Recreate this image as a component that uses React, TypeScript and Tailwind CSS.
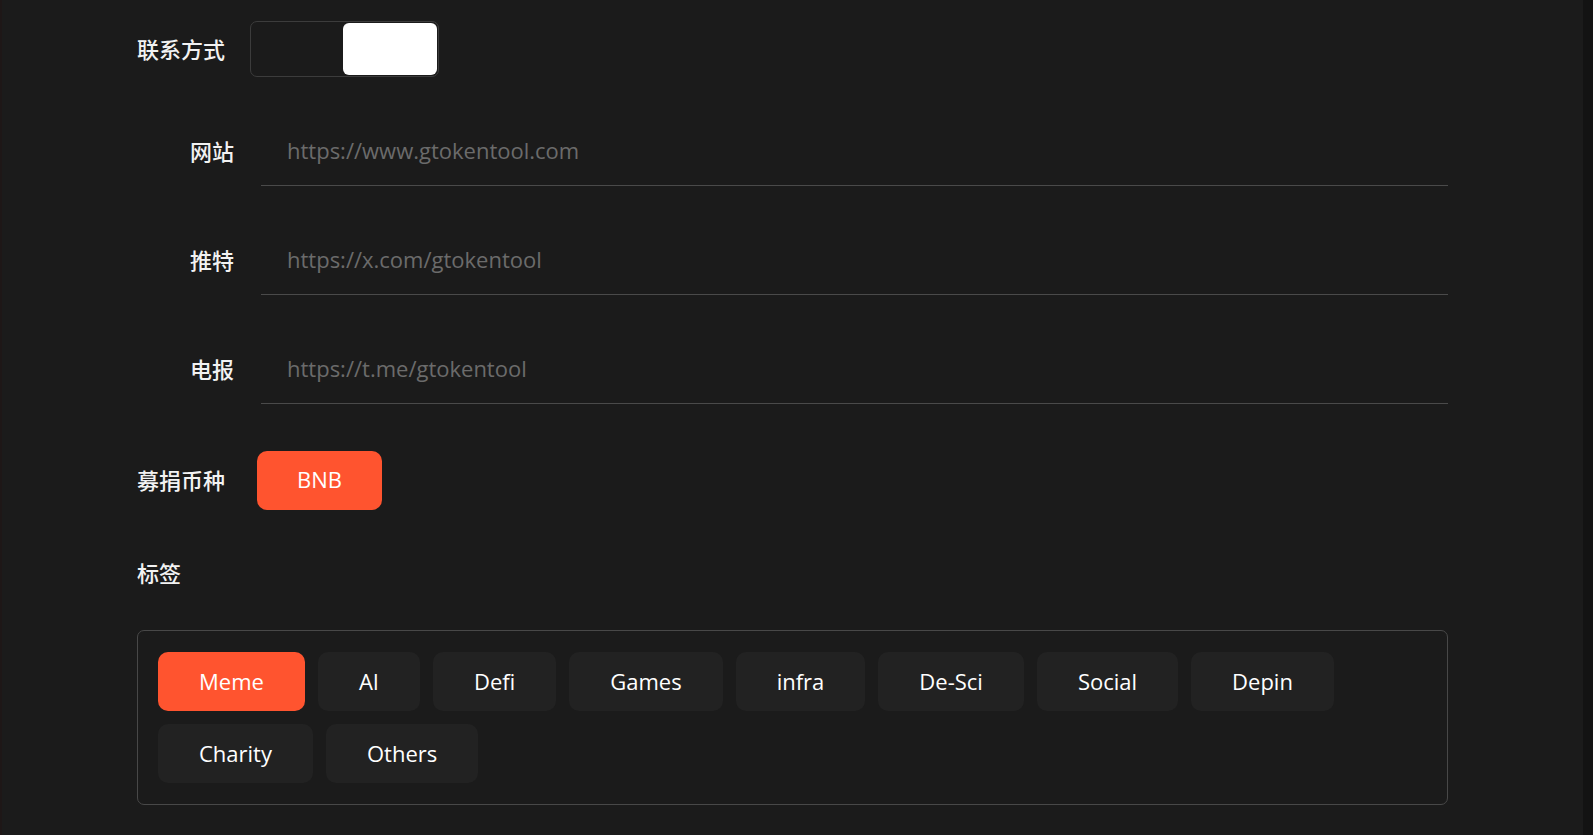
import React from 'react';

const cjk = { fontFamily: '"Noto Sans CJK SC", "Open Sans", sans-serif' };
const latin = { fontFamily: '"Open Sans", "Noto Sans CJK SC", sans-serif' };

const links = [
  { label: '网站', placeholder: 'https://www.gtokentool.com' },
  { label: '推特', placeholder: 'https://x.com/gtokentool' },
  { label: '电报', placeholder: 'https://t.me/gtokentool' },
];

const tags = ['Meme', 'AI', 'Defi', 'Games', 'infra', 'De-Sci', 'Social', 'Depin', 'Charity', 'Others'];

export default function App() {
  return (
    <div className="flex h-[835px] w-full overflow-hidden bg-[#1b1b1b]">
      <div className="w-[2px] shrink-0 bg-[#1e1717]" />
      <div className="flex-1 pl-[135px] pr-[135px]">
        {/* contact */}
        <div className="mt-[21px] flex items-center">
          <span className="mb-[3px] w-[113px] text-[22px] leading-[28px] font-medium text-[#f2f2f2]" style={cjk}>
            联系方式
          </span>
          <div className="flex h-[56px] w-[189px] justify-end rounded-[7px] border border-[#3c3c3c] p-px">
            <div className="h-full w-[94px] rounded-[6px] bg-white" />
          </div>
        </div>

        <div className="mt-[44px] flex flex-col gap-[44px]">
          {links.map((l) => (
            <div key={l.label} className="flex items-center">
              <span className="mb-[7px] w-[97px] text-right text-[22px] leading-[28px] font-medium text-[#f2f2f2]" style={cjk}>
                {l.label}
              </span>
              <input
                className="ml-[27px] h-[65px] flex-1 border-b border-[#4a4a4a] bg-transparent pb-[6px] pl-[26px] text-[22px] text-white outline-none placeholder:text-[#6b6b6b]"
                style={latin}
                placeholder={l.placeholder}
              />
            </div>
          ))}
        </div>

        {/* currency */}
        <div className="mt-[47px] flex items-center">
          <span className="mb-[3px] w-[120px] text-[22px] leading-[28px] font-medium text-[#f2f2f2]" style={cjk}>
            募捐币种
          </span>
          <button
            className="h-[59px] w-[125px] rounded-[10px] bg-[#ff542f] pb-[2px] text-[22px] text-white"
            style={latin}
          >
            BNB
          </button>
        </div>

        {/* tags */}
        <div className="mt-[48px] text-[22px] leading-[28px] font-medium text-[#f2f2f2]" style={cjk}>
          标签
        </div>
        <div className="mt-[44px] flex flex-wrap gap-[13px] rounded-[7px] border border-[#484848] px-[20px] pt-[21px] pb-[21px]">
          {tags.map((t, i) => (
            <button
              key={t}
              className={
                'h-[59px] rounded-[10px] px-[41px] text-[22px] text-white ' +
                (i === 0 ? 'bg-[#ff542f]' : 'bg-[#222222]')
              }
              style={latin}
            >
              {t}
            </button>
          ))}
        </div>
      </div>
      <div className="w-[10px] shrink-0 bg-[#131313]" />
    </div>
  );
}
